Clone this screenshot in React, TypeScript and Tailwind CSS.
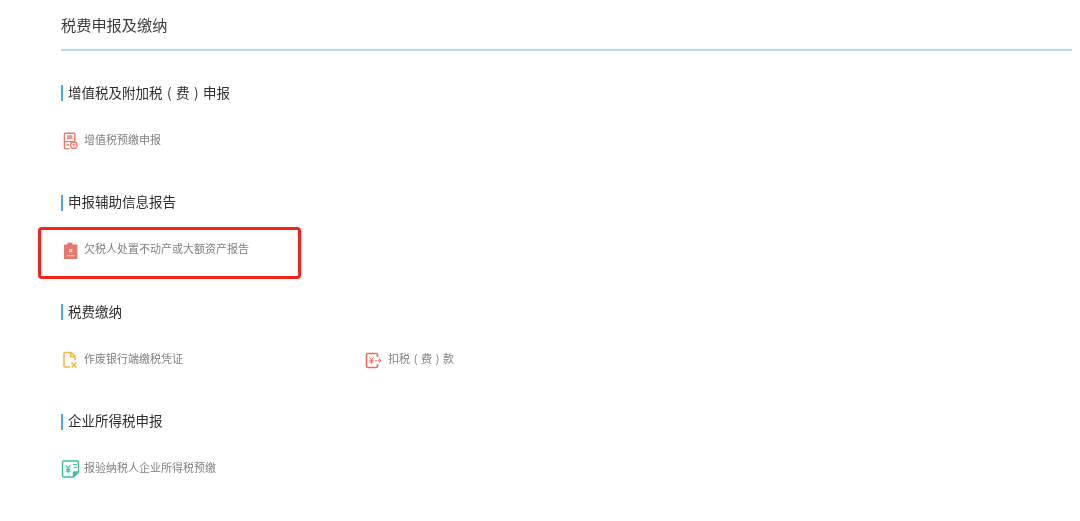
import React from "react";

const IconReport = () => (
  <svg width="17" height="18" viewBox="0 0 17 18" fill="none" stroke="#ec7a6c" strokeWidth="1.4">
    <path d="M8.5 16.6H4.4a1 1 0 0 1-1-1V2.2a1 1 0 0 1 1-1h8.4a1 1 0 0 1 1 1V9" />
    <rect x="6" y="3.2" width="5.4" height="4.2" fill="#f2978b" stroke="none" />
    <path d="M3.4 9.6h10.4M5.4 13h2.6" />
    <circle cx="12.8" cy="13.2" r="3.2" fill="#fff" />
    <path d="M12.8 11.4v3.6M11.2 12.8h3.2" strokeWidth="1" />
  </svg>
);

const IconClipboard = () => (
  <svg width="17" height="18" viewBox="0 0 17 18">
    <path d="M6.5 0.6h5v3h-5z" fill="#e8766a" />
    <rect x="3" y="2.4" width="13.4" height="14.6" rx="0.6" fill="#e8766a" />
    <path d="M8.2 7.2l3 3M11.2 7.2l-3 3" stroke="#fff" strokeWidth="1.1" />
    <path d="M5.5 13.6h8.4" stroke="#f6c1ba" strokeWidth="1.2" />
  </svg>
);

const IconFileX = () => (
  <svg width="17" height="18" viewBox="0 0 17 18" fill="none" stroke="#f5b33f" strokeWidth="1.5">
    <path d="M9 16H4a1 1 0 0 1-1-1V2.5a1 1 0 0 1 1-1h6l4 4V9" />
    <path d="M9.8 1.5v4.2H14" />
    <path d="M10.5 11.5l5 5M15.5 11.5l-5 5" />
  </svg>
);

const IconDeduct = () => (
  <svg width="17" height="17" viewBox="0 0 17 17" fill="none" stroke="#ec6f62" strokeWidth="1.7">
    <path d="M12.5 5V2.8a1.3 1.3 0 0 0-1.3-1.3H2.8a1.3 1.3 0 0 0-1.3 1.3v11.4a1.3 1.3 0 0 0 1.3 1.3h8.4a1.3 1.3 0 0 0 1.3-1.3V12" />
    <path d="M4.4 5.2l2.2 2.8 2.2-2.8M6.6 8v3.6M4.6 8.6h4M4.6 10.2h4" strokeWidth="1" />
    <path d="M10.2 8.5h1.6M12.8 8.5h1.2M14 6.9l1.8 1.6L14 10.1" strokeWidth="1.1" />
  </svg>
);

const IconNote = () => (
  <svg width="19" height="19" viewBox="0 0.5 19 19" fill="none" stroke="#3cc29b" strokeWidth="1.5">
    <path d="M2.8 1.5h13.4a1.3 1.3 0 0 1 1.3 1.3v9.7l-5 5H2.8a1.3 1.3 0 0 1-1.3-1.3V2.8a1.3 1.3 0 0 1 1.3-1.3z" />
    <path d="M17.5 12.5h-3.7a1.3 1.3 0 0 0-1.3 1.3v3.7" fill="#3cc29b" />
    <path d="M12 5h4M13 8h3" strokeWidth="1.1" />
    <path d="M5 6l2.2 2.6L9.4 6M7.2 8.6v5M5 9.8h4.4M5 11.6h4.4" strokeWidth="1.2" />
  </svg>
);

const Paren = ({ c }: { c: string }) => <span className="inline-block w-[1em] text-center">{c}</span>;

const sections = [
  {
    key: "a",
    title: <>增值税及附加税<Paren c="(" />费<Paren c=")" />申报</>,
    items: [{ icon: <IconReport />, label: <>增值税预缴申报</> }],
  },
  {
    key: "b",
    title: <>申报辅助信息报告</>,
    items: [{ icon: <IconClipboard />, label: <>欠税人处置不动产或大额资产报告</> }],
    highlighted: true,
  },
  {
    key: "c",
    title: <>税费缴纳</>,
    items: [
      { icon: <IconFileX />, label: <>作废银行端缴税凭证</> },
      { icon: <IconDeduct />, label: <>扣税<Paren c="(" />费<Paren c=")" />款</> },
    ],
  },
  {
    key: "d",
    title: <>企业所得税申报</>,
    items: [{ icon: <IconNote />, label: <>报验纳税人企业所得税预缴</> }],
  },
];

export default function App() {
  return (
    <div className="h-[521px] w-[1080px] overflow-hidden bg-white pl-[61px] pr-[8px] font-['Microsoft_YaHei','Noto_Sans_CJK_SC',sans-serif] blur-[0.35px]">
      <div className="flex h-[51px] items-center border-b-2 border-[#b3d9fb] text-[15.2px] text-[#3a3a3a]">
        税费申报及缴纳
      </div>
      <div className="flex flex-col gap-[44.5px] pt-[34px]">
        {sections.map((s) => (
          <section key={s.key} className="relative">
            <h2 className="flex h-4 items-center border-l-2 border-[#4aa5ee] pb-[2px] pl-[5px] text-[13.5px] font-normal text-[#2e2e2e]">
              <span>{s.title}</span>
            </h2>
            <div className="mt-[29px] grid grid-cols-[304px_304px] grid-rows-[20px]">
              {s.items.map((it, i) => (
                <div key={i} className="flex h-5 items-center text-[11px] text-[#808080]">
                  <span className="flex w-[23px] justify-start pt-[2px]">{it.icon}</span>
                  <span className="pb-[2px]">{it.label}</span>
                </div>
              ))}
            </div>
            {s.highlighted && (
              <div className="absolute left-[-23px] top-[32.5px] h-[52px] w-[263px] rounded-[4px] border-[3px] border-[#f5231c]" />
            )}
          </section>
        ))}
      </div>
    </div>
  );
}
